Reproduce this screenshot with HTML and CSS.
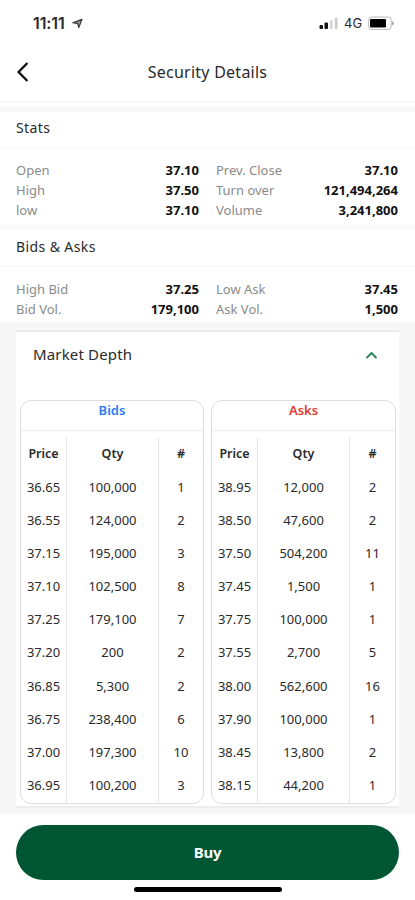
FILE: index.html
```
<!DOCTYPE html>
<html lang="en">
<head>
<meta charset="utf-8">
<title>Security Details</title>
<link rel="stylesheet" href="styles.css">
</head>
<body>
<div class="status">
  <span class="time">11:11</span>
  <svg class="loc" width="11" height="11" viewBox="0 0 11 11"><path d="M0.800 4.800 L10 1.200 L6.800 9.600 L5.600 5.400 Z" fill="#999" stroke="#333" stroke-width="1.100" stroke-linejoin="round"/></svg>
  <svg class="signal" width="20" height="12" viewBox="0 0 20 12"><rect x="0.500" y="8" width="3.500" height="4" rx="1" fill="#111"/><rect x="5.500" y="5.500" width="3.500" height="6.500" rx="1" fill="#111"/><rect x="10.800" y="3" width="2.800" height="9" rx="1" fill="#d8d8d8"/><rect x="15.800" y="0.500" width="2.800" height="11.500" rx="1" fill="#ccc"/></svg>
  <span class="net">4G</span>
  <svg class="battery" width="27" height="15" viewBox="0 0 27 15"><rect x="0.700" y="1" width="22.500" height="12.500" rx="3" fill="#fff" stroke="#bbb"/><rect x="2" y="3" width="16" height="8.500" rx="1" fill="#000"/><path d="M24 5 Q26 6 26 7.300 Q26 8.600 24 9.600 Z" fill="#aaa"/></svg>
</div>
<header class="bar">
  <svg class="back" width="14" height="22" viewBox="0 0 14 22"><path d="M12.400 2 L3.600 11 L12.400 20" fill="none" stroke="#111" stroke-width="2.300"/></svg>
  <h1>Security Details</h1>
</header>
<section class="block stats">
  <h2>Stats</h2>
  <dl>
    <dt>Open</dt><dd>37.10</dd><dt>Prev. Close</dt><dd>37.10</dd>
    <dt>High</dt><dd>37.50</dd><dt>Turn over</dt><dd>121,494,264</dd>
    <dt>low</dt><dd>37.10</dd><dt>Volume</dt><dd>3,241,800</dd>
  </dl>
</section>
<section class="block quotes">
  <h2>Bids &amp; Asks</h2>
  <dl>
    <dt>High Bid</dt><dd>37.25</dd><dt>Low Ask</dt><dd>37.45</dd>
    <dt>Bid Vol.</dt><dd>179,100</dd><dt>Ask Vol.</dt><dd>1,500</dd>
  </dl>
</section>
<main class="depth">
  <div class="panel">
    <div class="panel-head">
      <h2>Market Depth</h2>
      <svg width="13" height="9" viewBox="0 0 13 9"><path d="M1.500 7 L6.500 2 L11.500 7" fill="none" stroke="#2a7d59" stroke-width="1.900"/></svg>
    </div>
    <div class="books">
      <div class="book bids">
        <h3>Bids</h3>
        <div class="cols">
          <div class="col"><b>Price</b><span>36.65</span><span>36.55</span><span>37.15</span><span>37.10</span><span>37.25</span><span>37.20</span><span>36.85</span><span>36.75</span><span>37.00</span><span>36.95</span></div>
          <div class="col"><b>Qty</b><span>100,000</span><span>124,000</span><span>195,000</span><span>102,500</span><span>179,100</span><span>200</span><span>5,300</span><span>238,400</span><span>197,300</span><span>100,200</span></div>
          <div class="col"><b>#</b><span>1</span><span>2</span><span>3</span><span>8</span><span>7</span><span>2</span><span>2</span><span>6</span><span>10</span><span>3</span></div>
        </div>
      </div>
      <div class="book asks">
        <h3>Asks</h3>
        <div class="cols">
          <div class="col"><b>Price</b><span>38.95</span><span>38.50</span><span>37.50</span><span>37.45</span><span>37.75</span><span>37.55</span><span>38.00</span><span>37.90</span><span>38.45</span><span>38.15</span></div>
          <div class="col"><b>Qty</b><span>12,000</span><span>47,600</span><span>504,200</span><span>1,500</span><span>100,000</span><span>2,700</span><span>562,600</span><span>100,000</span><span>13,800</span><span>44,200</span></div>
          <div class="col"><b>#</b><span>2</span><span>2</span><span>11</span><span>1</span><span>1</span><span>5</span><span>16</span><span>1</span><span>2</span><span>1</span></div>
        </div>
      </div>
    </div>
  </div>
</main>
<footer>
  <button class="buy">Buy</button>
  <div class="home"></div>
</footer>
</body>
</html>
```
FILE: styles.css
```
* { box-sizing: border-box; margin: 0; padding: 0; }
body {
  width: 415px;
  height: 900px;
  overflow: hidden;
  background: #fff;
  color: #2a2a2a;
  font: 13px/20px "Noto Sans", sans-serif;
}
svg { display: block; flex: none; }
.status { height: 46px; display: flex; align-items: center; padding: 0 20px 0 33px; }
.time { font: 600 16px/20px Inter, sans-serif; letter-spacing: -.1px; width: 35px; }
.loc { margin-left: 4px; }
.signal { margin-left: auto; }
.net { font: 400 13px/20px Inter, sans-serif; margin: 0 6px 0 5px; width: 18px; }
.bar {
  height: 57px;
  display: grid;
  grid-template-columns: 40px 1fr 40px;
  align-items: center;
  padding: 0 15px 4px;
  border-bottom: 2px solid #f7f7f7;
}
.bar h1 { font-size: 16px; font-weight: 400; line-height: 22px; letter-spacing: .25px; text-align: center; }
.block h2 { font-size: 14px; font-weight: 400; letter-spacing: .4px; padding-left: 16px; border-bottom: 1px solid #f5f5f5; }
.stats { margin-top: 3px; height: 119px; border-top: 6px solid #f8f8f8; }
.stats h2 { height: 36px; line-height: 32px; }
.block dl {
  display: grid;
  grid-template-columns: 90px 93px 109px 90px;
  padding: 12px 16px 0;
}
.block dt { color: #8b8b8b; }
.block dt:nth-of-type(even) { padding-left: 17px; }
.block dd { color: #111; font-weight: 700; text-align: right; }
.quotes { height: 97px; border-top: 5px solid #f8f8f8; }
.quotes h2 { height: 37px; line-height: 33px; }
.depth { background: #f7f7f7; height: 492px; padding: 8px 16px 0; }
.panel { height: 478px; background: #fff; border-top: 2px solid #ebebeb; border-bottom: 2px solid #ededed; }
.panel-head { height: 68px; display: flex; align-items: center; justify-content: space-between; padding: 0 21px 21px 17px; }
.panel-head h2 { font-size: 15px; font-weight: 400; letter-spacing: .15px; padding-bottom: 3px; }
.books { display: flex; gap: 7px; padding: 0 3px 0 4px; }
.book { width: 184px; height: 404px; border: 1px solid #dedede; border-radius: 11px; overflow: hidden; }
.book h3 { height: 30px; font-size: 13px; line-height: 18px; font-weight: 600; text-align: center; border-bottom: 1px solid #ededed; }
.bids h3 { color: #2b7cf5; }
.asks { width: 185px; }
.asks h3 { color: #e23a30; }
.cols { display: grid; grid-template-columns: 46px 92px 1fr; padding-top: 7px; }
.col { display: grid; grid-auto-rows: 33.15px; align-items: center; text-align: center; border-right: 1px solid #e5e5e5; }
.col b, .col span { padding-bottom: 2px; }
.col:last-child { border-right: 0; }
.col b { font-size: 12.5px; font-weight: 600; }
footer { height: 86px; padding-top: 11px; }
.buy {
  display: block;
  width: 383px;
  height: 55px;
  margin: 0 auto;
  padding-bottom: 2px;
  border: 0;
  border-radius: 28px;
  background: #005533;
  color: #fff;
  font: 700 15px/20px "Noto Sans", sans-serif;
  letter-spacing: -.2px;
}
.home { width: 148px; height: 5px; margin: 7px auto 0; border-radius: 3px; background: #000; }
```
